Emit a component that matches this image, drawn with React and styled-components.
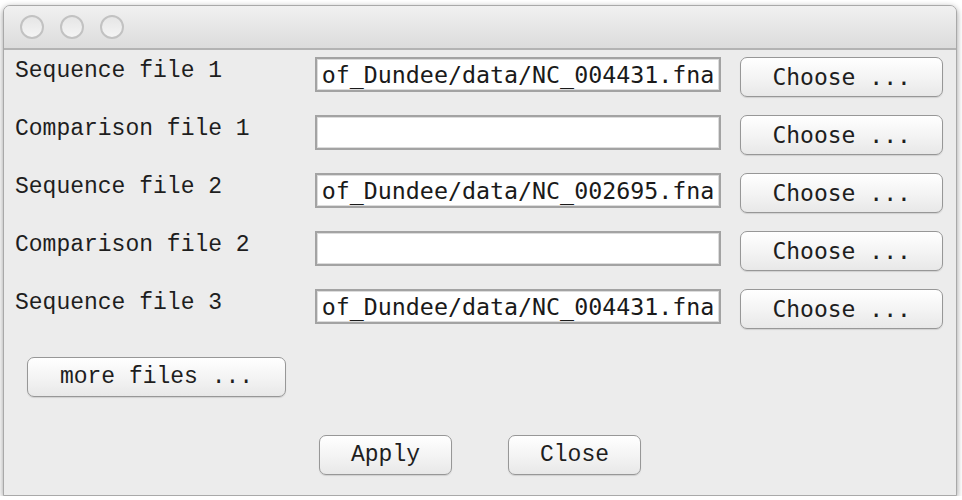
import React from "react";
import styled, { createGlobalStyle } from "styled-components";

const GlobalStyle = createGlobalStyle`
  html, body {
    margin: 0;
    padding: 0;
    background: #ffffff;
  }
`;

const Window = styled.div`
  box-sizing: border-box;
  width: 954px;
  height: 491px;
  margin: 5px 0 0 3px;
  display: flex;
  flex-direction: column;
  background: #ececec;
  border: 1px solid #a9a9a9;
  border-radius: 7px 7px 0 0;
  box-shadow: 0 2px 6px rgba(0, 0, 0, 0.4);
  overflow: hidden;
`;

const TitleBar = styled.div`
  height: 42px;
  display: flex;
  align-items: center;
  gap: 16px;
  padding-left: 16px;
  background: linear-gradient(#f1f1f1, #dcdcdc);
  border-bottom: 2px solid #b3b3b3;
  flex-shrink: 0;
`;

const Light = styled.span`
  box-sizing: border-box;
  width: 24px;
  height: 24px;
  border-radius: 50%;
  border: 2px solid #c2c2c2;
  background: linear-gradient(#e6e6e6, #f4f4f4);
`;

const Body = styled.div`
  display: flex;
  flex-direction: column;
  padding: 7px 13px 0 11px;
`;

const Row = styled.div`
  display: flex;
  align-items: flex-start;
  height: 58px;
`;

const Label = styled.div`
  width: 300px;
  font-family: "Liberation Mono", "Courier New", monospace;
  font-size: 23px;
  line-height: 28px;
  color: #1e1e1e;
  white-space: pre;
`;

const Field = styled.div`
  box-sizing: border-box;
  width: 407px;
  height: 35px;
  padding: 0 5px;
  background: #ffffff;
  border: 2px solid #a3a3a3;
  box-shadow: inset 0 0 0 1px #dcdcdc;
  font-family: "DejaVu Sans Mono", monospace;
  font-size: 23.3px;
  line-height: 31px;
  color: #1a1a1a;
  white-space: pre;
  overflow: hidden;
`;

const Button = styled.button`
  box-sizing: border-box;
  width: ${(p) => p.$width}px;
  height: 40px;
  margin-left: ${(p) => p.$offset || 0}px;
  padding: 0;
  background: linear-gradient(#ffffff, #f3f3f3 55%, #e8e8e8);
  border: 1.5px solid #979797;
  border-radius: 7px;
  box-shadow: 0 1px 1px rgba(0, 0, 0, 0.12);
  font-family: ${(p) =>
    p.$serif
      ? `"Liberation Mono", "Courier New", monospace`
      : `"DejaVu Sans Mono", monospace`};
  font-size: 23px;
  color: #1e1e1e;
  white-space: pre;
`;

const MoreRow = styled.div`
  display: flex;
  margin-top: 10px;
  padding-left: 12px;
`;

const Actions = styled.div`
  display: flex;
  justify-content: center;
  gap: 56px;
  margin-top: 38px;
  padding-right: 0;
  margin-left: 2px;
`;

const rows = [
  { label: "Sequence file 1", value: "of_Dundee/data/NC_004431.fna" },
  { label: "Comparison file 1", value: "" },
  { label: "Sequence file 2", value: "of_Dundee/data/NC_002695.fna" },
  { label: "Comparison file 2", value: "" },
  { label: "Sequence file 3", value: "of_Dundee/data/NC_004431.fna" },
];

export default function App() {
  return (
    <>
      <GlobalStyle />
      <Window>
        <TitleBar>
          <Light />
          <Light />
          <Light />
        </TitleBar>
        <Body>
          {rows.map(({ label, value }) => (
            <Row key={label}>
              <Label>{label}</Label>
              <Field>{value}</Field>
              <Button $width={203} $offset={19}>
                Choose ...
              </Button>
            </Row>
          ))}
          <MoreRow>
            <Button $width={259} $serif>
              more files ...
            </Button>
          </MoreRow>
          <Actions>
            <Button $width={133} $serif>
              Apply
            </Button>
            <Button $width={133} $serif>
              Close
            </Button>
          </Actions>
        </Body>
      </Window>
    </>
  );
}
